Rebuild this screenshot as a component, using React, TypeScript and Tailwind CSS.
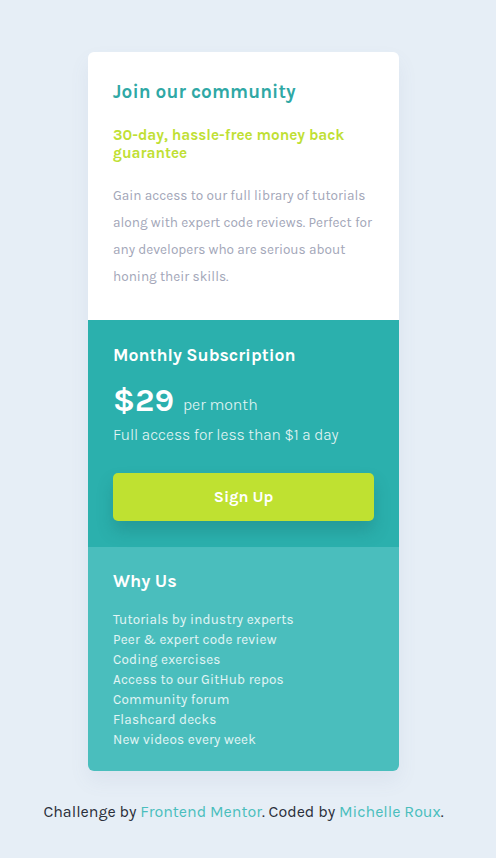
export default function App() {
  const items = [
    "Tutorials by industry experts",
    "Peer & expert code review",
    "Coding exercises",
    "Access to our GitHub repos",
    "Community forum",
    "Flashcard decks",
    "New videos every week",
  ];
  return (
    <div
      className="min-h-[858px] w-full bg-[#e6eef6] flex flex-col items-center pt-[52px] pr-[9px]"
      style={{ fontFamily: "Karla, Lato, 'Open Sans', sans-serif" }}
    >
      <div className="w-[311px] rounded-[6px] overflow-hidden shadow-[0_10px_20px_rgba(100,120,150,0.08)]">
        <section className="bg-white px-[25px] pt-[27px] pb-[30px]">
          <h1 className="text-[19px] leading-[26px] font-bold text-[#2fa8a5] tracking-[0.1px]">
            Join our community
          </h1>
          <h2 className="mt-[21px] text-[15.3px] leading-[18px] font-bold text-[#c0df34]">
            30-day, hassle-free money back guarantee
          </h2>
          <p className="mt-[20px] text-[13.6px] leading-[27px] text-[#a2a6b8]">
            Gain access to our full library of tutorials along with expert code reviews. Perfect for any developers who are serious about honing their skills.
          </p>
        </section>
        <section className="bg-[#2bb0ad] px-[25px] pt-[24px] pb-[26px] text-white">
          <h3 className="text-[17.7px] leading-[22px] font-bold">Monthly Subscription</h3>
          <div className="mt-[17px] flex items-center gap-[9px] h-[36px]">
            <span className="text-[32px] leading-[36px] font-bold">$29</span>
            <span className="text-[16px] leading-[20px] mt-[8px] font-light text-white/90">per month</span>
          </div>
          <p className="mt-[5px] text-[15.6px] leading-[22px] font-light text-white/90">Full access for less than $1 a day</p>
          <button className="mt-[27px] w-full h-[48px] rounded-[5px] bg-[#bfe131] text-white text-[16px] font-bold shadow-[0_10px_16px_rgba(20,90,90,0.25)]">
            Sign Up
          </button>
        </section>
        <section className="bg-[#4abebd] px-[25px] pt-[23px] pb-[21px] text-white">
          <h3 className="text-[18px] leading-[22px] font-bold">Why Us</h3>
          <ul className="mt-[18px] text-[13.5px] leading-[20px] text-white/85 tracking-[0.2px]">
            {items.map((t) => (
              <li key={t}>{t}</li>
            ))}
          </ul>
        </section>
      </div>
      <p className="mt-[31px] text-[16px] leading-[20px] text-[#2a2f3a]">
        Challenge by <a className="text-[#4abebd]">Frontend Mentor</a>. Coded by{" "}
        <a className="text-[#4abebd]">Michelle Roux</a>.
      </p>
    </div>
  );
}
